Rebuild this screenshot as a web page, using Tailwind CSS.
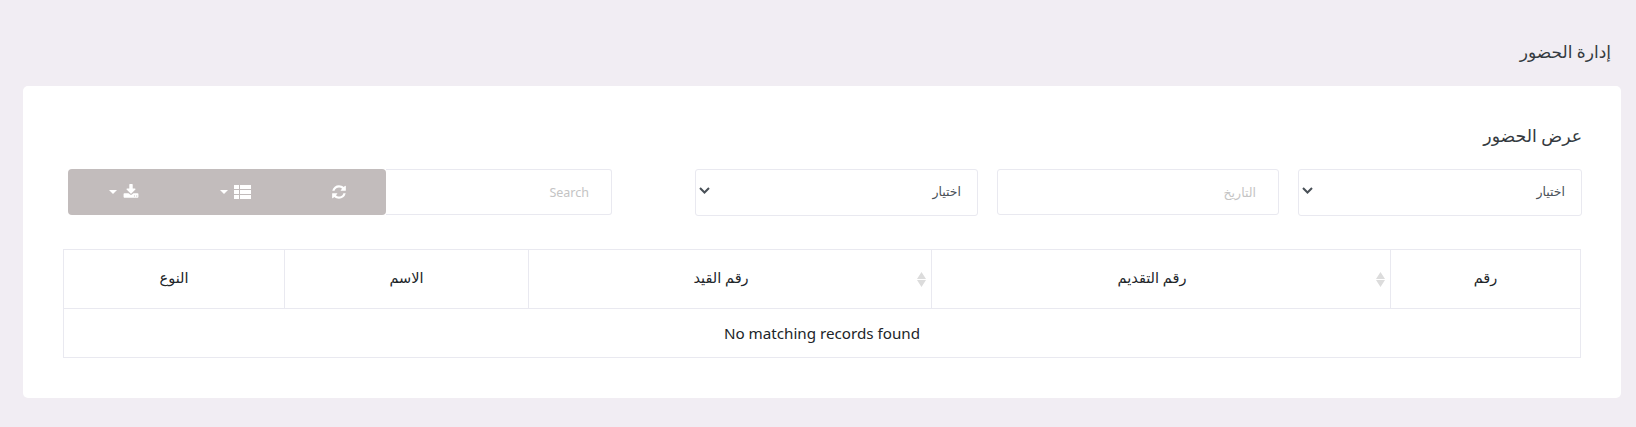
<!DOCTYPE html>
<html lang="ar" dir="rtl">
<head>
  <meta charset="UTF-8">
  <meta name="viewport" content="width=device-width, initial-scale=1.0">
  <title>إدارة الحضور</title>
  <script src="https://cdn.jsdelivr.net/npm/@tailwindcss/browser@4"></script>
</head>
<body class="bg-[#f1edf3] h-[427px] overflow-hidden font-['Noto_Sans','DejaVu_Sans',sans-serif] text-[#212529]">
  <h1 class="h-[86px] pr-[25px] pt-[40px] text-[17px] leading-[24px] font-normal text-[#343a40]">إدارة الحضور</h1>

  <div class="mr-[15px] ml-[23px] h-[312px] rounded-[5px] bg-white pr-[39px] pl-[40px] pt-[38px]">
    <h2 class="h-[44px] text-[17.3px] leading-[24px] font-normal text-[#343a40]">عرض الحضور</h2>

    <!-- filters -->
    <div class="flex items-center h-[48px]">
      <div class="relative w-[284px] h-[47px] shrink-0">
        <select class="w-full h-full appearance-none rounded-[3px] border border-[#e9e9f0] bg-white pr-[16px] text-[12.5px] text-[#495057]">
          <option>اختيار</option>
        </select>
        <svg class="absolute left-[4px] top-[18px] w-[11px] h-[7px]" viewBox="0 0 11 7"><path d="M1 1l4.5 4.5L10 1" fill="none" stroke="#495057" stroke-width="2"/></svg>
      </div>
      <input placeholder="التاريخ" class="w-[282px] h-[46px] mr-[19px] shrink-0 rounded-[3px] border border-[#e9e9f0] pr-[22px] text-[12.5px] placeholder:text-[#c4c4c4]">
      <div class="relative w-[283px] h-[47px] mr-[19px] shrink-0">
        <select class="w-full h-full appearance-none rounded-[3px] border border-[#e9e9f0] bg-white pr-[16px] text-[12.5px] text-[#495057]">
          <option>اختيار</option>
        </select>
        <svg class="absolute left-[4px] top-[18px] w-[11px] h-[7px]" viewBox="0 0 11 7"><path d="M1 1l4.5 4.5L10 1" fill="none" stroke="#495057" stroke-width="2"/></svg>
      </div>

      <div class="flex mr-[83px]">
        <input dir="rtl" placeholder="Search" class="w-[226px] h-[46px] rounded-r-[3px] border border-l-0 border-[#e9e9f0] pr-[22px] text-[12.5px] placeholder:text-[#c4c4c4]">
        <div class="flex h-[46px] rounded-[4px] bg-[#c2bcbc] text-white">
          <button class="w-[94px] flex items-center justify-center">
            <svg class="w-[16px] h-[16px]" viewBox="0 0 1792 1792" fill="#fff"><path d="M1639 1056q0 5-1 7-64 268-268 434.5t-478 166.5q-146 0-282.5-55t-243.5-157l-129 129q-19 19-45 19t-45-19-19-45v-448q0-26 19-45t45-19h448q26 0 45 19t19 45-19 45l-137 137q71 66 161 102t187 36q134 0 250-65t186-179q11-17 53-117 8-23 30-23h192q13 0 22.5 9.5t9.5 22.5zm25-800v448q0 26-19 45t-45 19h-448q-26 0-45-19t-19-45 19-45l138-138q-148-137-349-137-134 0-250 65t-186 179q-11 17-53 117-8 23-30 23h-199q-13 0-22.5-9.5t-9.5-22.5v-7q65-268 270-434.5t480-166.5q146 0 284 55.5t245 156.5l130-129q19-19 45-19t45 19 19 45z"/></svg>
          </button>
          <button class="w-[113px] flex items-center justify-center gap-[6px]">
            <svg class="w-[17px] h-[14px]" viewBox="0 0 17 14" fill="#fff"><rect width="5" height="4"/><rect x="6" width="11" height="4"/><rect y="5" width="5" height="4"/><rect x="6" y="5" width="11" height="4"/><rect y="10" width="5" height="4"/><rect x="6" y="10" width="11" height="4"/></svg>
            <span class="w-0 h-0 border-x-[4px] border-x-transparent border-t-[4px] border-t-white"></span>
          </button>
          <button class="w-[111px] flex items-center justify-center gap-[6px] pl-[1px]">
            <svg class="w-[16px] h-[16px]" viewBox="0 0 1792 1792" fill="#fff"><path d="M1344 1344q0-26-19-45t-45-19-45 19-19 45 19 45 45 19 45-19 19-45zm256 0q0-26-19-45t-45-19-45 19-19 45 19 45 45 19 45-19 19-45zm128-224v320q0 40-28 68t-68 28h-1472q-40 0-68-28t-28-68v-320q0-40 28-68t68-28h465l135 136q58 56 136 56t136-56l136-136h464q40 0 68 28t28 68zm-325-569q17 41-14 70l-448 448q-18 19-45 19t-45-19l-448-448q-31-29-14-70 17-39 59-39h256v-448q0-26 19-45t45-19h256q26 0 45 19t19 45v448h256q42 0 59 39z"/></svg>
            <span class="w-0 h-0 border-x-[4px] border-x-transparent border-t-[4px] border-t-white"></span>
          </button>
        </div>
      </div>
    </div>

    <!-- table -->
    <table class="mt-[33px] mr-[1px] w-[1517px] table-fixed border-collapse text-[14.5px]">
      <colgroup>
        <col class="w-[190px]"><col class="w-[459px]"><col class="w-[403px]"><col class="w-[244px]"><col class="w-[221px]">
      </colgroup>
      <thead>
        <tr class="h-[59px]">
          <th class="border border-[#e9e9f0] pb-[2px] font-normal">رقم</th>
          <th class="relative border border-[#e9e9f0] pr-[18px] pb-[2px] font-normal">
            رقم التقديم
            <svg class="absolute right-[5px] top-[22px] w-[9px] h-[15px]" viewBox="0 0 9 15" fill="#dcdcdc"><path d="M4.5 0L9 7H0zM0 8h9l-4.5 7z"/></svg>
          </th>
          <th class="relative border border-[#e9e9f0] pr-[18px] pb-[2px] font-normal">
            رقم القيد
            <svg class="absolute right-[5px] top-[22px] w-[9px] h-[15px]" viewBox="0 0 9 15" fill="#dcdcdc"><path d="M4.5 0L9 7H0zM0 8h9l-4.5 7z"/></svg>
          </th>
          <th class="border border-[#e9e9f0] pb-[2px] font-normal">الاسم</th>
          <th class="border border-[#e9e9f0] pb-[2px] font-normal">النوع</th>
        </tr>
      </thead>
      <tbody>
        <tr class="h-[49px]">
          <td colspan="5" class="border border-[#e9e9f0] text-center text-[15.2px]">No matching records found</td>
        </tr>
      </tbody>
    </table>
  </div>
</body>
</html>
